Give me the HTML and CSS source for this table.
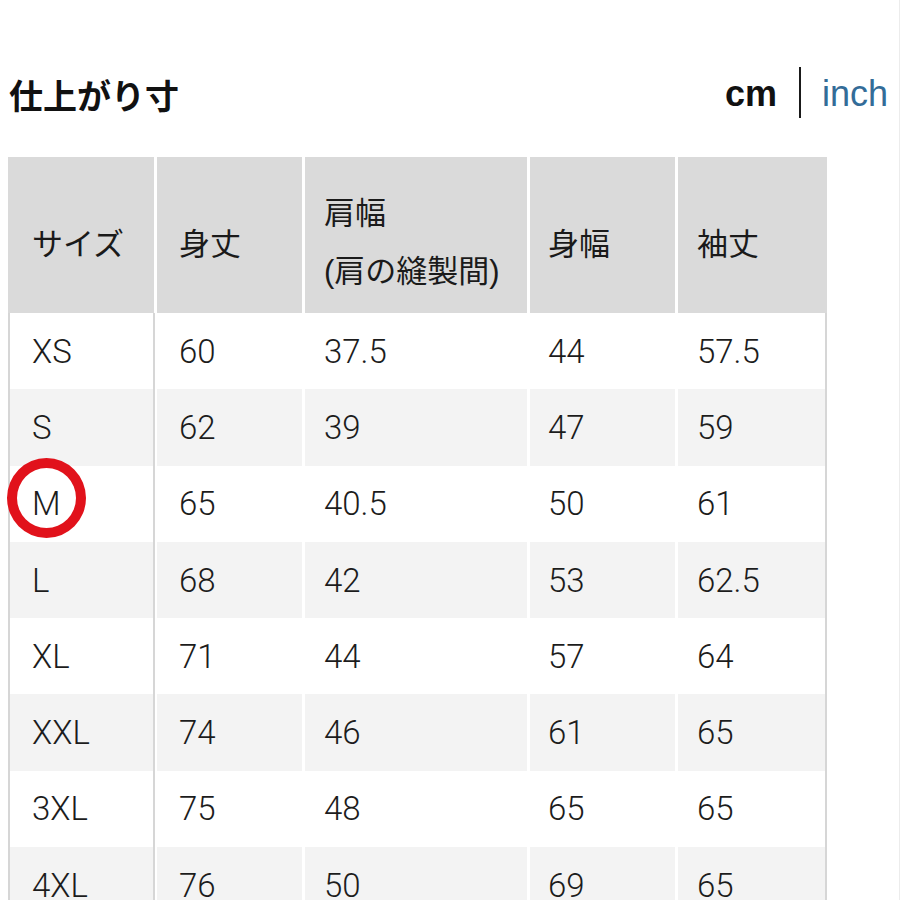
FILE: index.html
```html
<!DOCTYPE html>
<html lang="ja">
<head>
<meta charset="utf-8">
<title>仕上がり寸</title>
<link rel="stylesheet" href="styles.css">
</head>
<body>
<div class="page">
  <div class="top">
    <h1 class="title">仕上がり寸</h1>
    <div class="units">
      <span class="unit-active">cm</span>
      <span class="unit-sep"></span>
      <span class="unit-link">inch</span>
    </div>
  </div>
  <div class="table">
    <div class="row head">
      <div class="cell">サイズ</div>
      <div class="cell">身丈</div>
      <div class="cell two"><span>肩幅</span><span>(肩の縫製間)</span></div>
      <div class="cell">身幅</div>
      <div class="cell">袖丈</div>
    </div>
    <div class="row"><div class="cell">XS</div><div class="cell">60</div><div class="cell">37.5</div><div class="cell">44</div><div class="cell">57.5</div></div>
    <div class="row alt"><div class="cell">S</div><div class="cell">62</div><div class="cell">39</div><div class="cell">47</div><div class="cell">59</div></div>
    <div class="row"><div class="cell marked">M<span class="ring"></span></div><div class="cell">65</div><div class="cell">40.5</div><div class="cell">50</div><div class="cell">61</div></div>
    <div class="row alt"><div class="cell">L</div><div class="cell">68</div><div class="cell">42</div><div class="cell">53</div><div class="cell">62.5</div></div>
    <div class="row"><div class="cell">XL</div><div class="cell">71</div><div class="cell">44</div><div class="cell">57</div><div class="cell">64</div></div>
    <div class="row alt"><div class="cell">XXL</div><div class="cell">74</div><div class="cell">46</div><div class="cell">61</div><div class="cell">65</div></div>
    <div class="row"><div class="cell">3XL</div><div class="cell">75</div><div class="cell">48</div><div class="cell">65</div><div class="cell">65</div></div>
    <div class="row alt"><div class="cell">4XL</div><div class="cell">76</div><div class="cell">50</div><div class="cell">69</div><div class="cell">65</div></div>
  </div>
</div>
</body>
</html>
```
FILE: styles.css
```css
html, body {
  margin: 0;
  padding: 0;
  background: #fff;
}
body {
  font-family: Roboto, "Liberation Sans", "Noto Sans CJK JP", sans-serif;
  color: #1c1c1c;
  overflow: hidden;
}
.page {
  width: 899px;
  height: 900px;
  border-right: 1px solid #ececec;
  box-sizing: content-box;
  overflow: hidden;
}
.top {
  display: flex;
  justify-content: space-between;
  align-items: center;
  height: 50px;
  margin-top: 69px;
  padding: 0 11px 0 9px;
}
.title {
  margin: 0;
  font-family: "Noto Sans CJK JP", sans-serif;
  font-size: 34px;
  font-weight: 700;
  color: #111;
}
.units {
  display: flex;
  align-items: center;
  gap: 21px;
  font-family: "Liberation Sans", Arial, sans-serif;
  font-size: 36px;
}
.unit-active {
  font-weight: 700;
  color: #111;
  margin-right: 1px;
}
.unit-sep {
  width: 2px;
  height: 51px;
  background: #1a1a1a;
  margin-top: -3px;
}
.unit-link {
  color: #336c98;
}
.table {
  margin: 38px 0 0 8px;
  width: 819px;
}
.row {
  display: grid;
  grid-template-columns: 144px 145px 222px 145px 147px;
  column-gap: 3px;
  height: 76.3px;
  border-left: 2px solid #d6d6d6;
  border-right: 2px solid #d6d6d6;
  background: #fff;
}
.row.head {
  height: 156px;
  border-color: #dadada;
}
.cell {
  display: flex;
  align-items: center;
  padding-left: 21px;
  font-size: 33px;
  font-weight: 300;
  position: relative;
}
.cell:first-child {
  padding-left: 22px;
  border-right: 2px solid #d6d6d6;
  margin-right: -1px;
}
.cell:nth-child(2) { padding-left: 22px; }
.cell:nth-child(3) { padding-left: 19px; }
.cell:nth-child(4) { padding-left: 18px; }
.cell:nth-child(5) { padding-left: 19px; }
.head .cell {
  background: #dadada;
  font-family: "Noto Sans CJK JP", sans-serif;
  font-size: 31px;
  font-weight: 400;
  padding-top: 12px;
  box-sizing: border-box;
  color: #1a1a1a;
}
.head .cell:first-child {
  border-right: none;
  margin-right: 0;
}
.head .cell.two {
  flex-direction: column;
  align-items: flex-start;
  justify-content: center;
  line-height: 61px;
}
.head .cell.two span:last-child {
  font-family: "Liberation Sans", "Noto Sans CJK JP", sans-serif;
}
.alt .cell {
  background: #f3f3f3;
}
.ring {
  position: absolute;
  left: -3px;
  top: -8px;
  width: 79px;
  height: 80px;
  box-sizing: border-box;
  border: 10px solid #e1121b;
  border-radius: 50%;
}
```
